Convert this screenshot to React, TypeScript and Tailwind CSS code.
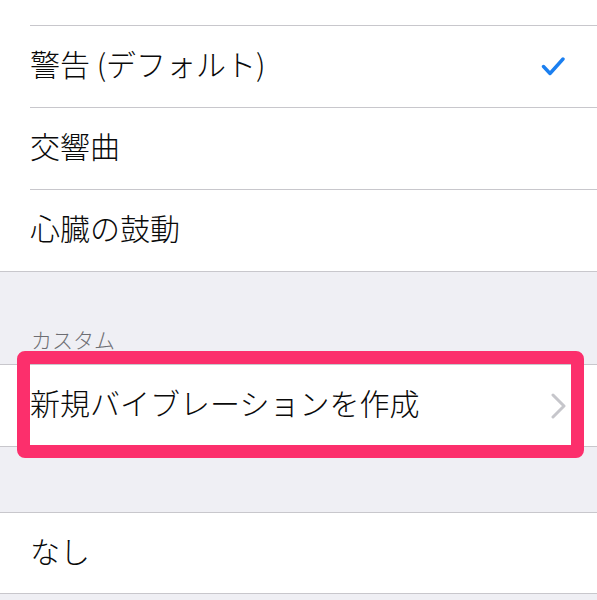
import React from "react";

const font = { fontFamily: '"Noto Sans CJK JP", "Noto Sans", sans-serif' };

function Row({ label, right }: { label: string; right?: React.ReactNode }) {
  return (
    <div className="pl-[30px]">
      <div className="h-[82px] flex items-center pr-[30px] border-t border-[#c8c7cc]">
        <span className="flex-1 mb-[7px] text-[30px] leading-none font-light text-[#0a0a0a]">{label}</span>
        {right}
      </div>
    </div>
  );
}

function Check() {
  return (
    <svg width="24" height="20" viewBox="0 0 24 20" className="mr-[2px]">
      <polyline points="2.5,9.5 9,16.5 22,2" fill="none" stroke="#1b7ff0" strokeWidth="3.4" strokeLinecap="round" strokeLinejoin="round" />
    </svg>
  );
}

function Chevron() {
  return (
    <svg width="16" height="26" viewBox="0 0 16 26">
      <polyline points="2,2 13,13 2,24" fill="none" stroke="#c6c6cb" strokeWidth="3" strokeLinecap="round" strokeLinejoin="round" />
    </svg>
  );
}

export default function App() {
  return (
    <div className="w-[597px] h-[600px] overflow-hidden bg-[#efeff4]" style={font}>
      <div className="bg-white border-b border-[#c8c7cc]">
        <div className="h-[25px]" />
        <Row label="警告 (デフォルト)" right={<Check />} />
        <Row label="交響曲" />
        <Row label="心臓の鼓動" />
      </div>
      <div className="h-[92px] flex items-end pl-[31px] pb-[14px]">
        <span className="text-[21px] leading-none font-light text-[#6d6d72]">カスタム</span>
      </div>
      <div className="relative bg-white border-y border-[#c8c7cc]">
        <div className="pl-[30px]">
          <div className="h-[81px] flex items-center pr-[30px]">
            <span className="flex-1 mb-[7px] text-[30px] leading-none font-light text-[#0a0a0a]">新規バイブレーションを作成</span>
            <Chevron />
          </div>
        </div>
        <div className="absolute left-[17px] top-[-14px] w-[567px] h-[107px] border-[13px] border-[#fc2f6c] rounded-[8px]" />
      </div>
      <div className="h-[65px]" />
      <div className="bg-white border-y border-[#c8c7cc]">
        <div className="pl-[30px]">
          <div className="h-[80px] flex items-center pr-[30px]">
            <span className="flex-1 mb-[7px] text-[30px] leading-none font-light text-[#0a0a0a]">なし</span>
          </div>
        </div>
      </div>
    </div>
  );
}
